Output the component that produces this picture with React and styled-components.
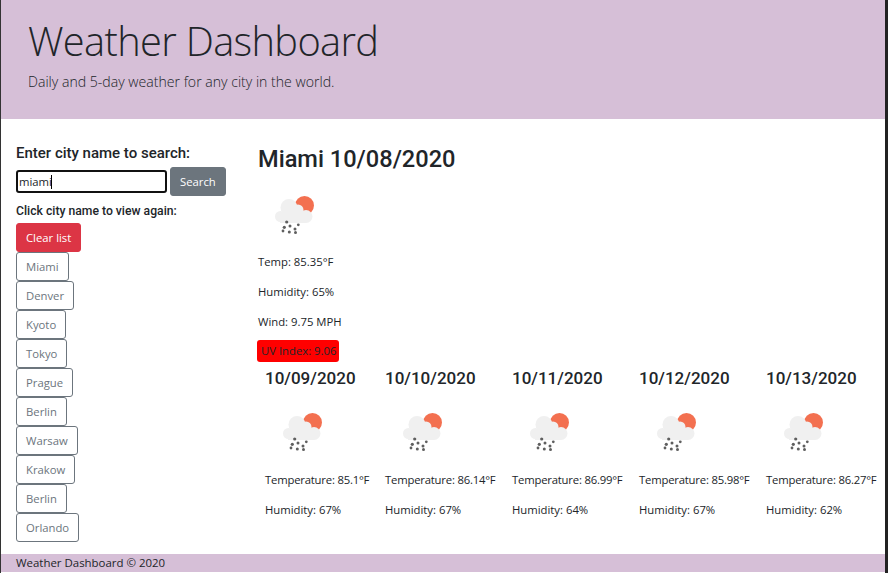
import React from "react";
import styled, { createGlobalStyle } from "styled-components";

const Global = createGlobalStyle`
  html, body { margin: 0; padding: 0; background: #fff; }
  body { font-family: "Open Sans", "Noto Sans", sans-serif; color: #212529; font-size: 11.3px; }
  * { box-sizing: border-box; }
`;

const Frame = styled.div`
  width: 888px;
  height: 573px;
  display: flex;
  flex-direction: column;
  overflow: hidden;
  background: #fff;
  border-left: 1px solid #333;
  border-right: 3px solid #222;
`;

const Banner = styled.header`
  height: 119px;
  flex: none;
  background: #d6bfd7;
  padding: 14px 27px 0;
`;
const Title = styled.h1`
  margin: 0;
  font-size: 39.8px;
  letter-spacing: -0.65px;
  line-height: 54px;
  font-weight: 300;
`;
const Lead = styled.p`
  margin: 4px 0 0;
  font-size: 14.1px;
  line-height: 20px;
  font-weight: 300;
`;

const Main = styled.main`
  flex: 1;
  display: flex;
  min-height: 0;
`;
const Side = styled.aside`
  width: 257px;
  flex: none;
  padding: 25px 0 0 15px;
  display: flex;
  flex-direction: column;
  align-items: flex-start;
`;
const SearchLabel = styled.label`
  font-family: Roboto, sans-serif;
  font-size: 15px;
  line-height: 18px;
  font-weight: 500;
`;
const SearchRow = styled.div`
  display: flex;
  gap: 3px;
  margin-top: 5px;
  align-items: center;
`;
const InputWrap = styled.div`
  position: relative;
  display: flex;
`;
const CityInput = styled.input`
  width: 151px;
  height: 23px;
  border: 2px solid #111;
  border-radius: 3px;
  padding: 0 1px;
  font: 11.3px "Open Sans", sans-serif;
  color: #212529;
  outline: none;
`;
const Caret = styled.span`
  position: absolute;
  left: 35px;
  top: 5px;
  width: 1px;
  height: 14px;
  background: #000;
`;
const Button = styled.button`
  height: 29px;
  padding: 0 9px;
  border-radius: 3px;
  font: 11.3px "Open Sans", sans-serif;
  color: ${(p) => p.$fg};
  background: ${(p) => p.$bg};
  border: 1px solid ${(p) => p.$line};
  display: block;
`;
const AgainLabel = styled.div`
  font-family: Roboto, sans-serif;
  margin-top: 7px;
  margin-bottom: 4px;
  font-size: 12.2px;
  line-height: 16px;
  font-weight: 500;
`;

const Content = styled.section`
  flex: 1;
  padding-top: 24px;
  min-width: 0;
`;
const Today = styled.h2`
  margin: 0;
  font-family: Roboto, sans-serif;
  font-size: 23.6px;
  line-height: 32px;
  font-weight: 500;
`;
const IconBox = styled.div`
  height: 77px;
  padding: 21px 0 0 17px;
`;
const Line = styled.p`
  margin: 0 0 10px;
  font-size: 11.3px;
  line-height: 20px;
  white-space: nowrap;
  letter-spacing: ${(p) => (p.$tight ? "-0.2px" : "0")};
`;
const Uv = styled.span`
  display: block;
  width: 82px;
  margin: -2px 0 0 -1px;
  background: #f00;
  border-radius: 3px;
  font-size: 11.3px;
  line-height: 22px;
  padding: 0 4px;
  white-space: nowrap;
`;
const Forecast = styled.div`
  display: flex;
  margin-top: 5px;
`;
const Day = styled.div`
  padding-left: 7px;
  width: ${(p) => p.$w}px;
  flex: none;
`;
const DayTitle = styled.h3`
  margin: 0;
  font-family: Roboto, sans-serif;
  font-size: 17px;
  line-height: 22px;
  font-weight: 500;
`;
const DayIcon = styled.div`
  height: 81px;
  padding: 24px 0 0 18px;
`;
const Footer = styled.footer`
  height: 18px;
  flex: none;
  margin-bottom: 1px;
  background: #d6bfd7;
  padding-left: 15px;
  font-size: 11.45px;
  line-height: 18px;
`;

const WeatherIcon = () => (
  <svg width="40" height="40" viewBox="0 0 40 40" display="block">
    <circle cx="29.500" cy="9.500" r="9.500" fill="#f37050" />
    <g fill="#f0f0f0">
      <circle cx="5.500" cy="20.500" r="5.500" />
      <circle cx="14" cy="11.500" r="8.500" />
      <circle cx="23" cy="14" r="5.500" />
      <circle cx="31" cy="20.500" r="6.500" />
      <rect x="5" y="16" width="26" height="11" />
    </g>
    <g fill="#5f5f5f">
      <circle cx="11.700" cy="26" r="1.600" />
      <circle cx="9.300" cy="31.300" r="1.600" />
      <circle cx="15" cy="30" r="1.500" />
      <circle cx="23.300" cy="28.800" r="1.400" />
      <circle cx="20" cy="33" r="1.500" />
      <circle cx="8" cy="35" r="1.400" />
      <circle cx="14.300" cy="36" r="1.500" />
      <circle cx="20.500" cy="36.500" r="1.500" />
    </g>
  </svg>
);

const cities = ["Miami", "Denver", "Kyoto", "Tokyo", "Prague", "Berlin", "Warsaw", "Krakow", "Berlin", "Orlando"];
const days = [
  { d: "10/09/2020", t: "85.1", h: 67, w: 120 },
  { d: "10/10/2020", t: "86.14", h: 67, w: 127 },
  { d: "10/11/2020", t: "86.99", h: 64, w: 127 },
  { d: "10/12/2020", t: "85.98", h: 67, w: 127 },
  { d: "10/13/2020", t: "86.27", h: 62, w: 122 },
];

export default function App() {
  return (
    <Frame>
      <Global />
      <Banner>
        <Title>Weather Dashboard</Title>
        <Lead>Daily and 5-day weather for any city in the world.</Lead>
      </Banner>
      <Main>
        <Side>
          <SearchLabel>Enter city name to search:</SearchLabel>
          <SearchRow>
            <InputWrap>
              <CityInput defaultValue="miami" />
              <Caret />
            </InputWrap>
            <Button $bg="#6c757d" $fg="#fff" $line="#6c757d">Search</Button>
          </SearchRow>
          <AgainLabel>Click city name to view again:</AgainLabel>
          <Button $bg="#dc3545" $fg="#fff" $line="#dc3545">Clear list</Button>
          {cities.map((c, i) => (
            <Button key={i} $bg="#fff" $fg="#6c757d" $line="#6c757d">{c}</Button>
          ))}
        </Side>
        <Content>
          <Today>Miami 10/08/2020</Today>
          <IconBox><WeatherIcon /></IconBox>
          <Line>Temp: 85.35°F</Line>
          <Line>Humidity: 65%</Line>
          <Line>Wind: 9.75 MPH</Line>
          <Uv>UV Index: 9.06</Uv>
          <Forecast>
            {days.map((x) => (
              <Day key={x.d} $w={x.w}>
                <DayTitle>{x.d}</DayTitle>
                <DayIcon><WeatherIcon /></DayIcon>
                <Line $tight>Temperature: {x.t}°F</Line>
                <Line>Humidity: {x.h}%</Line>
              </Day>
            ))}
          </Forecast>
        </Content>
      </Main>
      <Footer>Weather Dashboard © 2020</Footer>
    </Frame>
  );
}
